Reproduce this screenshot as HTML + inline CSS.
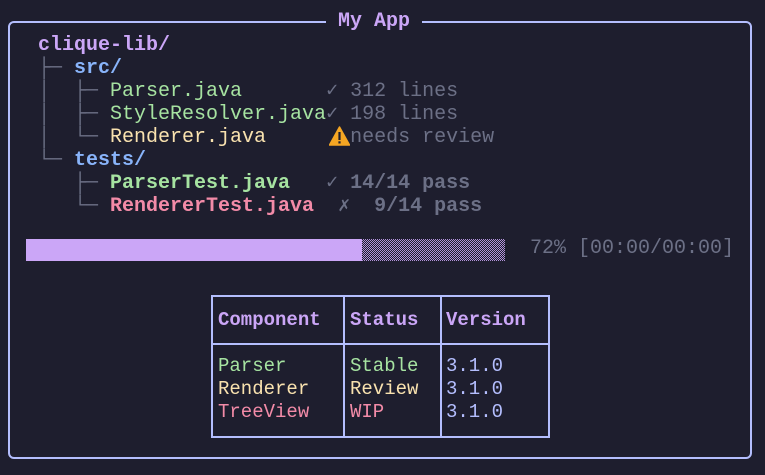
<!DOCTYPE html>
<html><head><meta charset="utf-8"><style>
html,body{margin:0;padding:0;background:#1e1e2e;width:765px;height:475px;overflow:hidden}
body{position:relative;font-family:"Liberation Mono","DejaVu Sans Mono",monospace;font-size:20px;color:#cdd6f4}
.frame{position:absolute;left:8px;top:21px;width:740px;height:434px;border:2px solid #b4befe;border-radius:6px}
.title{position:absolute;left:326px;top:10px;background:#1e1e2e;padding:0 12px;color:#cba6f7;font-weight:bold;line-height:24px;white-space:pre}
.l{position:absolute;left:38px;white-space:pre;line-height:23px;height:23px}
.g{color:#6c7086}.m{color:#cba6f7;font-weight:bold}.b{color:#89b4fa;font-weight:bold}
.gr{color:#a6e3a1}.y{color:#f9e2af}.r{color:#f38ba8}.bd{font-weight:bold}
.bar{position:absolute;left:26px;top:239px;width:336px;height:22px;background:#cba6f7}
.dot{position:absolute;left:362px;top:239px;width:143px;height:22px;background:repeating-conic-gradient(#cba6f7 0 25%,#1e1e2e 0 50%) 0 0/2px 2px;opacity:.85}
.pct{position:absolute;left:530px;top:237px;color:#6c7086;line-height:24px;white-space:pre}
.tbl{position:absolute;left:211px;top:295px;width:335px;height:139px;border:2px solid #b4befe}
.v{position:absolute;top:0;width:2px;height:139px;background:#b4befe}
.h{position:absolute;left:0;top:46px;width:335px;height:2px;background:#b4befe}
.t{position:absolute;white-space:pre;line-height:23px;font-size:19px}
</style></head><body>
<div class="frame"></div>
<div class="title">My App</div>
<div class="l m" style="top:34px">clique-lib/</div>
<div class="l" style="top:57px"><span class="g">├─ </span><span class="b">src/</span></div>
<div class="l" style="top:80px"><span class="g">│  ├─ </span><span class="gr">Parser.java</span>       <span class="g">✓ 312 lines</span></div>
<div class="l" style="top:103px"><span class="g">│  ├─ </span><span class="gr">StyleResolver.java</span><span class="g">✓ 198 lines</span></div>
<div class="l" style="top:126px"><span class="g">│  └─ </span><span class="y">Renderer.java</span>       <span class="g">needs review</span></div>
<svg style="position:absolute;left:329px;top:126px" width="21" height="20" viewBox="0 0 21 20"><path d="M10.5 1 L20.5 19 L0.5 19 Z" fill="#f5a623" stroke="#f5a623" stroke-linejoin="round" stroke-width="1.5"/><rect x="9.4" y="6" width="2.2" height="8" fill="#1e1e2e"/><rect x="9.4" y="15.3" width="2.2" height="2.2" fill="#1e1e2e"/></svg>
<div class="l" style="top:149px"><span class="g">└─ </span><span class="b">tests/</span></div>
<div class="l" style="top:172px"><span class="g">   ├─ </span><span class="gr bd">ParserTest.java</span>   <span class="g bd">✓ 14/14 pass</span></div>
<div class="l" style="top:195px"><span class="g">   └─ </span><span class="r bd">RendererTest.java</span>  <span class="g bd">✗  9/14 pass</span></div>
<div class="bar"></div><div class="dot"></div>
<div class="pct">72% [00:00/00:00]</div>
<div class="tbl">
<div class="v" style="left:130px"></div><div class="v" style="left:227px"></div><div class="h"></div>
<div class="t m" style="left:5px;top:12px">Component</div>
<div class="t m" style="left:137px;top:12px">Status</div>
<div class="t m" style="left:233px;top:12px">Version</div>
<div class="t gr" style="left:5px;top:58px">Parser</div>
<div class="t y" style="left:5px;top:81px">Renderer</div>
<div class="t r" style="left:5px;top:104px">TreeView</div>
<div class="t gr" style="left:137px;top:58px">Stable</div>
<div class="t y" style="left:137px;top:81px">Review</div>
<div class="t r" style="left:137px;top:104px">WIP</div>
<div class="t" style="left:233px;top:58px;color:#b4befe">3.1.0</div>
<div class="t" style="left:233px;top:81px;color:#b4befe">3.1.0</div>
<div class="t" style="left:233px;top:104px;color:#b4befe">3.1.0</div>
</div>
</body></html>
